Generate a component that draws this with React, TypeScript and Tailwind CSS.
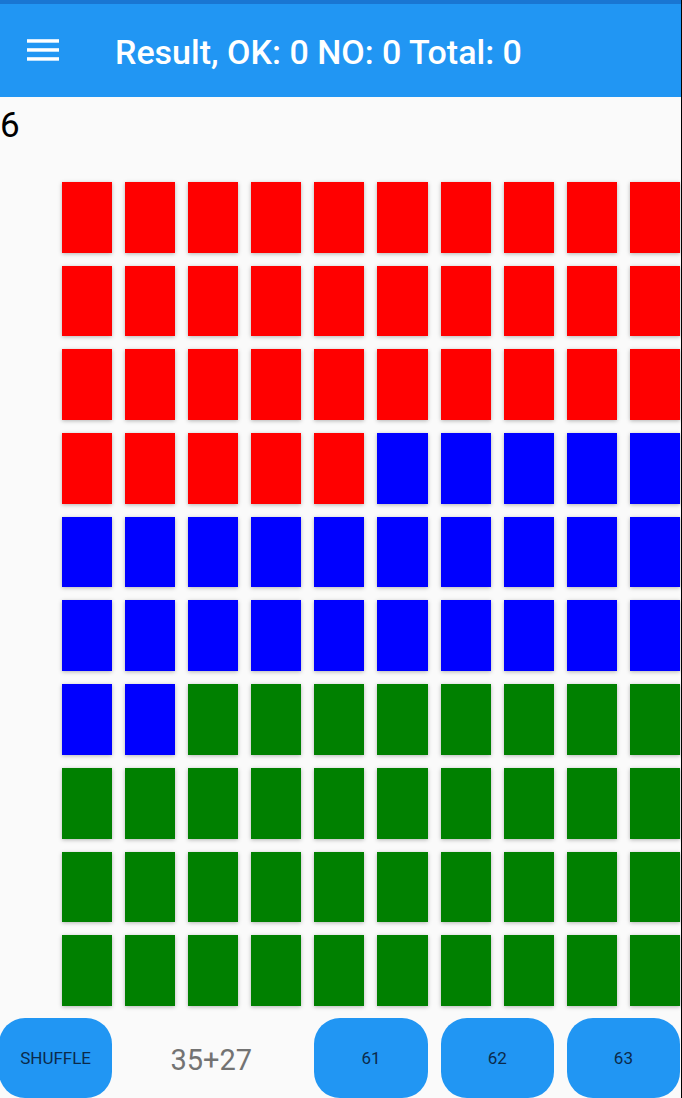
const RED_COUNT = 35;
const BLUE_COUNT = 27;
const CELL_COUNT = 100;
const ANSWERS = [61, 62, 63];

function cellColor(index: number): string {
  if (index < RED_COUNT) return "bg-[#ff0000]";
  if (index < RED_COUNT + BLUE_COUNT) return "bg-[#0000ff]";
  return "bg-[#008000]";
}

function MenuIcon() {
  return (
    <svg width="32" height="23" viewBox="0 0 32 23" fill="currentColor" aria-hidden="true">
      <rect y="0.2" width="32" height="3.5" />
      <rect y="9.2" width="32" height="3.5" />
      <rect y="18.2" width="32" height="3.5" />
    </svg>
  );
}

function Header() {
  return (
    <header className="flex h-[97px] items-center border-t-4 border-[#1976d2] bg-[#2196f3] pl-[27px] text-white">
      <button type="button" aria-label="Open menu" className="shrink-0">
        <MenuIcon />
      </button>
      <h1 className="ml-14 pt-0.5 text-[34px] leading-10 font-medium whitespace-nowrap">
        Result, OK: 0 NO: 0 Total: 0
      </h1>
    </header>
  );
}

function Board() {
  return (
    <div className="grid flex-1 auto-rows-fr grid-cols-10 gap-[13px] pl-[62px]">
      {Array.from({ length: CELL_COUNT }, (_, i) => (
        <div key={i} className={`${cellColor(i)} shadow-[0_1px_4px_rgba(0,0,0,0.28)]`} />
      ))}
    </div>
  );
}

const pill = "col-span-2 rounded-[26px] bg-[#2196f3] text-[17px] leading-5 text-[#0b2a4a]";

function Controls() {
  return (
    <footer className="-ml-px grid h-20 grid-cols-11 gap-[13px]">
      <button type="button" className={pill}>
        SHUFFLE
      </button>
      <p className="col-span-3 flex items-center justify-center pt-1 pr-1 text-[29px] leading-9 text-[#737373]">
        {RED_COUNT}+{BLUE_COUNT}
      </p>
      {ANSWERS.map((answer) => (
        <button key={answer} type="button" className={pill}>
          {answer}
        </button>
      ))}
    </footer>
  );
}

export default function App() {
  return (
    <div className="flex min-h-screen flex-col overflow-hidden border-r border-black bg-[#fafafa] font-[Roboto,sans-serif]">
      <Header />
      <main className="flex flex-1 flex-col pr-px">
        <p className="h-[85px] pt-[9px] text-[35px] leading-10 text-black">6</p>
        <div className="flex flex-1 flex-col gap-3">
          <Board />
          <Controls />
        </div>
      </main>
    </div>
  );
}
